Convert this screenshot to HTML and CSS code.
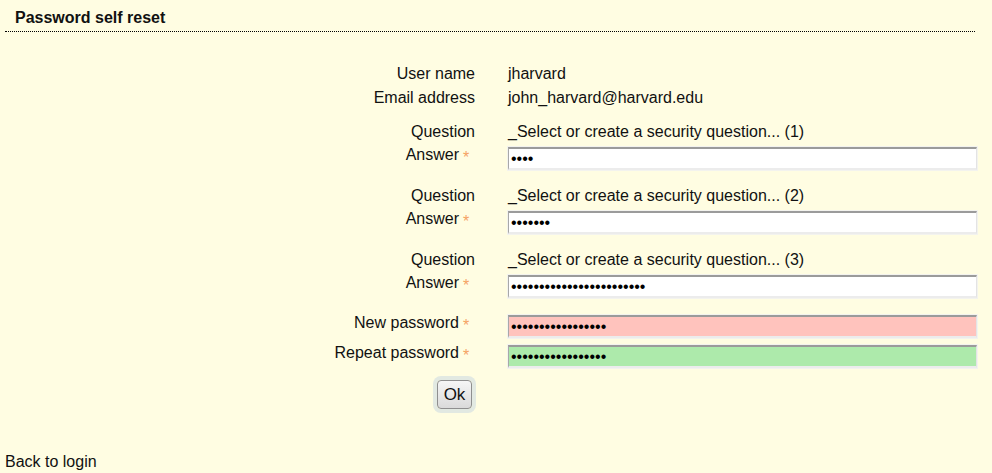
FILE: index.html
```html
<!DOCTYPE html>
<html lang="en">
<head>
<meta charset="utf-8">
<title>Password self reset</title>
<link rel="stylesheet" href="styles.css">
</head>
<body>
<div class="page">
  <h1 class="title">Password self reset</h1>
  <form class="form">
    <div class="info">
      <div class="row"><div class="label">User name</div><div class="value">jharvard</div></div>
      <div class="row"><div class="label">Email address</div><div class="value">john_harvard@harvard.edu</div></div>
    </div>
    <div class="group">
      <div class="row q"><div class="label">Question</div><div class="value">_Select or create a security question... (1)</div></div>
      <div class="row a"><div class="label">Answer<span class="req">*</span></div><div class="value"><input class="field" type="password" value="abcd"></div></div>
    </div>
    <div class="group">
      <div class="row q"><div class="label">Question</div><div class="value">_Select or create a security question... (2)</div></div>
      <div class="row a"><div class="label">Answer<span class="req">*</span></div><div class="value"><input class="field" type="password" value="abcdefg"></div></div>
    </div>
    <div class="group">
      <div class="row q"><div class="label">Question</div><div class="value">_Select or create a security question... (3)</div></div>
      <div class="row a"><div class="label">Answer<span class="req">*</span></div><div class="value"><input class="field" type="password" value="abcdefghijklmnopqrstuvwx"></div></div>
    </div>
    <div class="pw">
      <div class="row p"><div class="label">New password<span class="req">*</span></div><div class="value"><input class="field bad" type="password" value="abcdefghijklmnopq"></div></div>
      <div class="row p"><div class="label">Repeat password<span class="req">*</span></div><div class="value"><input class="field good" type="password" value="abcdefghijklmnopq"></div></div>
    </div>
    <div class="actions"><button type="button" class="ok">Ok</button></div>
  </form>
  <a class="back" href="#">Back to login</a>
</div>
</body>
</html>
```

FILE: styles.css
```css
html, body {
  margin: 0;
  padding: 0;
  background: #fffde2;
}
body {
  font-family: "Liberation Sans", Arial, sans-serif;
  font-size: 16px;
  color: #111;
}
.page {
  width: 992px;
  height: 473px;
  overflow: hidden;
}
.title {
  margin: 0 17px 0 5px;
  padding: 8px 0 3px 10px;
  font-size: 16px;
  line-height: 20px;
  font-weight: bold;
  border-bottom: 1px dotted #000;
}
.form {
  margin: 0;
  width: 977px;
}
.info {
  padding-top: 30px;
}
.row {
  display: grid;
  grid-template-columns: 475px 469px;
  column-gap: 33px;
  line-height: 24px;
}
.label {
  text-align: right;
  white-space: nowrap;
}
.value {
  white-space: nowrap;
}
.group {
  margin-top: 10px;
}
.group + .group {
  margin-top: 13px;
}
.row.q {
  height: 23px;
}
.row.a {
  height: 28px;
}
.pw {
  margin-top: 12px;
}
.row.p {
  height: 30px;
}
.req {
  display: inline-block;
  width: 16px;
  padding-left: 4px;
  box-sizing: border-box;
  text-align: left;
  color: #f5a263;
  font-size: 16px;
  font-weight: normal;
  vertical-align: -3px;
  line-height: 16px;
}
.field {
  display: block;
  box-sizing: border-box;
  width: 469px;
  height: 23px;
  margin: 4px 0 0 0;
  padding: 0 2px;
  font-family: "Liberation Sans", Arial, sans-serif;
  font-size: 16px;
  color: #000;
  background: #fff;
  border-style: solid;
  border-width: 2px 1px 2px 1px;
  border-color: #9b9b9b #e4e4e4 #ececec #a8a8a8;
  box-shadow: 0 0 0 1px #f3f3ee;
  outline: none;
}
.field.bad {
  background: #ffc3bd;
}
.field.good {
  background: #adeaab;
}
.actions {
  width: 475px;
  display: flex;
  justify-content: flex-end;
  padding-top: 9px;
}
.ok {
  width: 35px;
  height: 29px;
  margin-right: 3px;
  padding: 0;
  font-family: "Liberation Sans", Arial, sans-serif;
  font-size: 17px;
  color: #111;
  border: 1px solid #8f8f8f;
  border-radius: 4px;
  background: linear-gradient(#f6f6f6, #dadada);
  box-shadow: 0 0 0 4px #e2e9e2;
}
.back {
  display: block;
  margin-top: 41px;
  padding-left: 5px;
  line-height: 24px;
  color: #111;
  text-decoration: none;
}
```
